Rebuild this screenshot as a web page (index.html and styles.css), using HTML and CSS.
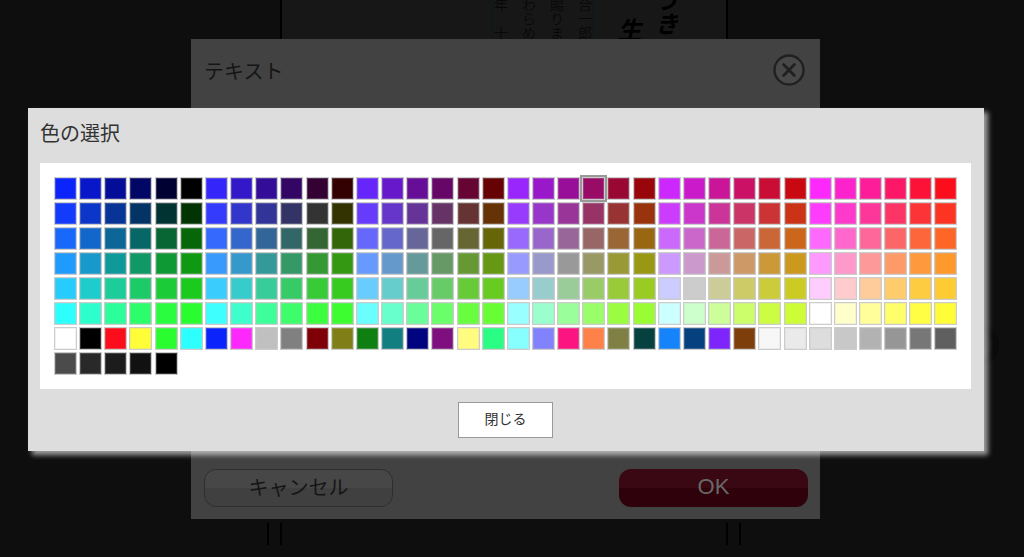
FILE: index.html
```html
<!DOCTYPE html>
<html lang="ja">
<head>
<meta charset="utf-8">
<title>色の選択</title>
<link rel="stylesheet" href="styles.css">
</head>
<body>
<div class="stage">
  <main class="viewer">
    <div class="sheet">
      <div class="sheet-page">
        <div class="selection"></div>
        <div class="script-text">合一郎<br>賜りま<br>わらめ<br>年　十</div>
        <span class="brush brush-left">生</span>
        <span class="brush brush-right">うき</span>
      </div>
      <div class="sheet-foot"></div>
    </div>
    <button class="next" type="button" aria-label="次へ"></button>
  </main>

  <section class="layer text-layer">
    <div class="text-dialog">
      <header class="text-head">
        <h2 class="title text-title">テキスト</h2>
        <button class="close" type="button" aria-label="閉じる">
          <svg width="32" height="32" viewBox="0 0 32 32" fill="none" stroke="#202020">
            <circle cx="16" cy="16" r="14.5" stroke-width="2.4" fill="#484848"/>
            <path d="M10.6 10.6L21.4 21.4M21.4 10.6L10.6 21.4" stroke-width="2.8" stroke-linecap="round"/>
          </svg>
        </button>
      </header>
      <footer class="text-foot">
        <button class="pill cancel" type="button">キャンセル</button>
        <button class="pill ok" type="button">OK</button>
      </footer>
    </div>
  </section>

  <section class="layer color-layer">
    <div class="color-dialog" role="dialog" aria-labelledby="color-title">
      <h1 class="title color-title" id="color-title">色の選択</h1>
      <div class="palette" id="palette"></div>
      <button class="done" type="button">閉じる</button>
    </div>
  </section>
</div>
<script src="palette.js"></script>
</body>
</html>
```

FILE: styles.css
```css
* {
  box-sizing: border-box;
}

body {
  margin: 0;
  background: #0e0e0e;
  color: #333;
  font-family: "Liberation Sans", "Noto Sans CJK JP", sans-serif;
}

button {
  margin: 0;
  padding: 0;
  border: 0;
  background: none;
  color: inherit;
  font: inherit;
}

.stage {
  display: grid;
  grid-template: minmax(0, 1fr) / minmax(0, 1fr);
  height: 100vh;
  min-height: 480px;
  overflow: hidden;
}

.viewer,
.layer {
  grid-area: 1 / 1;
}

.viewer {
  position: relative;
  padding-right: 16px;
}

.sheet {
  display: flex;
  flex-direction: column;
  width: 448px;
  height: 100%;
  margin: 0 auto;
  padding-bottom: 12px;
}

.sheet-page {
  position: relative;
  flex: 1;
  border: 1px solid #000;
  border-width: 0 2px;
  background: #171717;
  color: #040404;
}

.selection {
  position: absolute;
  top: 0;
  left: 210px;
  width: 101px;
  height: 100%;
  border: 1px solid #0b1822;
  border-width: 0 1px;
}

.script-text {
  position: absolute;
  top: -2px;
  left: 204px;
  width: 113px;
  font-family: "Noto Sans CJK JP", sans-serif;
  font-weight: 300;
  font-size: 14px;
  line-height: 28px;
  white-space: nowrap;
  writing-mode: vertical-rl;
}

.brush {
  position: absolute;
  color: #000;
  font-family: "Noto Sans CJK JP", sans-serif;
  font-weight: 700;
  font-size: 24px;
  line-height: 24px;
  font-style: italic;
  white-space: nowrap;
  writing-mode: vertical-rl;
}

.brush-left {
  top: 18px;
  left: 335px;
}

.brush-right {
  top: -12px;
  left: 372px;
}

.sheet-foot {
  height: 22px;
  margin: 0 -13px;
  background:
    linear-gradient(#000, #000) 0 0 / 2px 100% no-repeat,
    linear-gradient(#000, #000) 13px 0 / 2px 100% no-repeat,
    linear-gradient(#000, #000) calc(100% - 13px) 0 / 2px 100% no-repeat,
    linear-gradient(#000, #000) 100% 0 / 2px 100% no-repeat;
}

.sheet-page {
  margin-bottom: 4px;
}

.next {
  position: absolute;
  top: 325px;
  right: 25px;
  width: 40px;
  height: 40px;
  border: 7px solid #0a0a0a;
  border-radius: 50%;
}

.layer {
  position: relative;
}

.text-layer {
  display: flex;
  justify-content: center;
  padding: 39px 13px 38px 0;
}

.text-dialog {
  display: flex;
  flex-direction: column;
  justify-content: space-between;
  width: 629px;
  padding: 12px 12px 12px 13px;
  background: #424242;
  color: #151515;
}

.text-head,
.text-foot {
  display: flex;
  align-items: center;
  justify-content: space-between;
}

.text-head {
  align-items: flex-start;
  padding: 3px 3px 0 0;
}

.title {
  margin: 0;
  font-size: 20px;
  font-weight: 400;
  line-height: 32px;
}

.text-title {
  padding-top: 2px;
}

.close {
  width: 32px;
  height: 32px;
}

.close svg {
  display: block;
}

.pill {
  width: 189px;
  height: 38px;
  padding-bottom: 2px;
  border-radius: 12px;
}

.cancel {
  padding-bottom: 4px;
  border: 1px solid #2e2e2e;
  background: linear-gradient(#474747 50%, #404040 50%);
  font-size: 20px;
}

.ok {
  background: linear-gradient(#390812 50%, #2f020b 50%);
  color: #686868;
  font-size: 22px;
}

.color-layer {
  display: flex;
  align-items: flex-start;
  padding: 108px 40px 0 28px;
}

.color-dialog {
  display: flex;
  flex-direction: column;
  flex: 1;
  min-width: 0;
  padding: 10px 13px 13px 12px;
  background: #ddd;
  box-shadow: 4px 4px 5px rgba(255, 255, 255, 0.6);
}

.color-title {
  padding-bottom: 13px;
}

.palette {
  display: grid;
  grid-template-columns: repeat(36, 23px);
  justify-content: space-between;
  row-gap: 2px;
  padding: 14px 13px 14px 14px;
  background: #fff;
}

.swatch {
  height: 23px;
  border: 1px solid #ccc;
  box-shadow: inset 0 0 0 1px rgba(200, 200, 200, 0.25);
}

.swatch.selected {
  outline: 2px solid #999;
}

.done {
  align-self: center;
  width: 95px;
  height: 36px;
  margin-top: 13px;
  padding-bottom: 4px;
  border: 1px solid #999;
  background: #fff;
  font-size: 14px;
}
```

FILE: palette.js
```js
const CORNERS = {
  '001': [11, 36, 251], '010': [41, 253, 47], '011': [45, 255, 254],
  '100': [252, 13, 27], '101': [253, 40, 252], '110': [255, 253, 56]
};

// Softens a pure RGB value towards the display tone of its nearest primary.
function tone(rgb) {
  const max = Math.max(...rgb);
  const min = Math.min(...rgb);
  const mid = rgb[0] + rgb[1] + rgb[2] - max - min;
  const shift = [0, 0, 0];
  for (const [level, weight] of [[max, max - mid], [mid, mid - min]]) {
    if (weight === 0) continue;
    const key = rgb.map(v => (v >= level ? 1 : 0)).join('');
    CORNERS[key].forEach((v, i) => {
      shift[i] += (v - 255 * Number(key[i])) * (weight / 255) * (max / 255);
    });
  }
  return rgb.map((v, i) => {
    const value = shift[i] > 0 ? Math.hypot(v, shift[i]) : v + shift[i];
    return Math.round(Math.min(255, Math.max(0, value)));
  });
}

const colors = [];
for (let g = 0; g <= 255; g += 51) {
  for (let r = 0; r <= 255; r += 51) {
    for (let b = 255; b >= 0; b -= 51) {
      colors.push(`rgb(${tone([r, g, b]).join(', ')})`);
    }
  }
}

colors.push(...(
  'fff 000 fc0d1b fffd38 2afd2f 2dfffe 0b24fb fd28fc c0c0c0 808080 7f0006 807f17 ' +
  '0f7f12 117f80 00047f 7f0f7f fffc80 29fd83 86fffe 8182fc fc1480 fd8148 818044 064140 ' +
  '1584fb 07407f 7e25fb 7d3e0b f7f7f7 eaeaea ddd c8c8c8 b2b2b2 969696 777 5f5f5f ' +
  '4b4b4b 292929 1c1c1c 111 000'
).split(' ').map(hex => '#' + hex));

const SELECTED = 21;
const palette = document.getElementById('palette');
colors.forEach((color, i) => {
  const swatch = document.createElement('button');
  swatch.type = 'button';
  swatch.className = i === SELECTED ? 'swatch selected' : 'swatch';
  swatch.style.backgroundColor = color;
  swatch.setAttribute('aria-label', color);
  palette.append(swatch);
});
```
